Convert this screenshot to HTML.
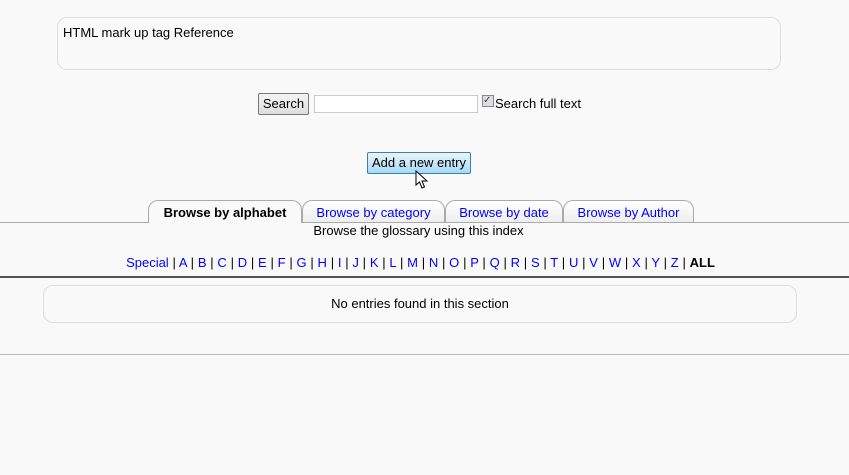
<html><head><style>
body{margin:0;background:#f9f9f9;font-family:"Liberation Sans",sans-serif;font-size:13px;color:#000;width:849px;height:475px;position:relative;overflow:hidden}
.a{position:absolute}
a{color:#00f;text-decoration:none}
.tab{position:absolute;top:200px;height:22px;border:1px solid #aaa;border-bottom:none;border-radius:10px 10px 0 0;background:linear-gradient(#fff,#eee);text-align:center;line-height:24px;box-sizing:border-box;font-size:13px}
</style></head><body>
<div class="a" style="left:57px;top:17px;width:724px;height:53px;border:1px solid #ddd;border-radius:10px;box-sizing:border-box;padding:7px 5px">HTML mark up tag Reference</div>
<div class="a" style="left:258px;top:93px;width:51px;height:22px;border:1px solid #777;border-radius:2px;background:linear-gradient(#f4f4f4,#ddd);box-sizing:border-box;text-align:center;line-height:20px">Search</div>
<div class="a" style="left:314px;top:95px;width:164px;height:18px;border:1px solid #ccc;background:#fff;box-sizing:border-box"></div>
<div class="a" style="left:482px;top:95px;width:12px;height:12px;border:1px solid #888;background:#ddd;box-sizing:border-box;font-size:10px;line-height:10px;color:#335">✓</div>
<div class="a" style="left:495px;top:96px">Search full text</div>
<div class="a" style="left:367px;top:152px;width:104px;height:22px;border:1px solid #3c7fb1;border-radius:2px;background:linear-gradient(#e8f5fc,#a7d9f5);box-sizing:border-box;text-align:center;line-height:20px">Add a new entry</div>
<svg class="a" style="left:415px;top:170px" width="14" height="20"><path d="M1 1 L1 15 L4.5 12 L7 18 L9.5 17 L7 11 L12 11 Z" fill="#fff" stroke="#000" stroke-width="1"/></svg>
<div class="a" style="left:0;top:222px;width:849px;border-top:1px solid #aaa"></div>
<div class="tab" style="left:148px;width:154px;font-weight:bold;background:#f9f9f9;height:23px">Browse by alphabet</div>
<div class="tab" style="left:302px;width:143px"><a>Browse by category</a></div>
<div class="tab" style="left:445px;width:118px"><a>Browse by date</a></div>
<div class="tab" style="left:563px;width:131px"><a>Browse by Author</a></div>
<div class="a" style="left:-6px;top:223px;width:849px;text-align:center">Browse the glossary using this index</div>
<div class="a" style="left:-4px;top:255px;width:849px;text-align:center;word-spacing:0.16px"><a>Special</a> | <a>A</a> | <a>B</a> | <a>C</a> | <a>D</a> | <a>E</a> | <a>F</a> | <a>G</a> | <a>H</a> | <a>I</a> | <a>J</a> | <a>K</a> | <a>L</a> | <a>M</a> | <a>N</a> | <a>O</a> | <a>P</a> | <a>Q</a> | <a>R</a> | <a>S</a> | <a>T</a> | <a>U</a> | <a>V</a> | <a>W</a> | <a>X</a> | <a>Y</a> | <a>Z</a> | <b>ALL</b></div>
<div class="a" style="left:0;top:276px;width:849px;border-top:2px solid #555"></div>
<div class="a" style="left:43px;top:285px;width:754px;height:38px;border:1px solid #ddd;border-radius:10px;box-sizing:border-box;text-align:center;line-height:36px">No entries found in this section</div>
<div class="a" style="left:0;top:354px;width:849px;border-top:1px solid #bbb"></div>
</body></html>
